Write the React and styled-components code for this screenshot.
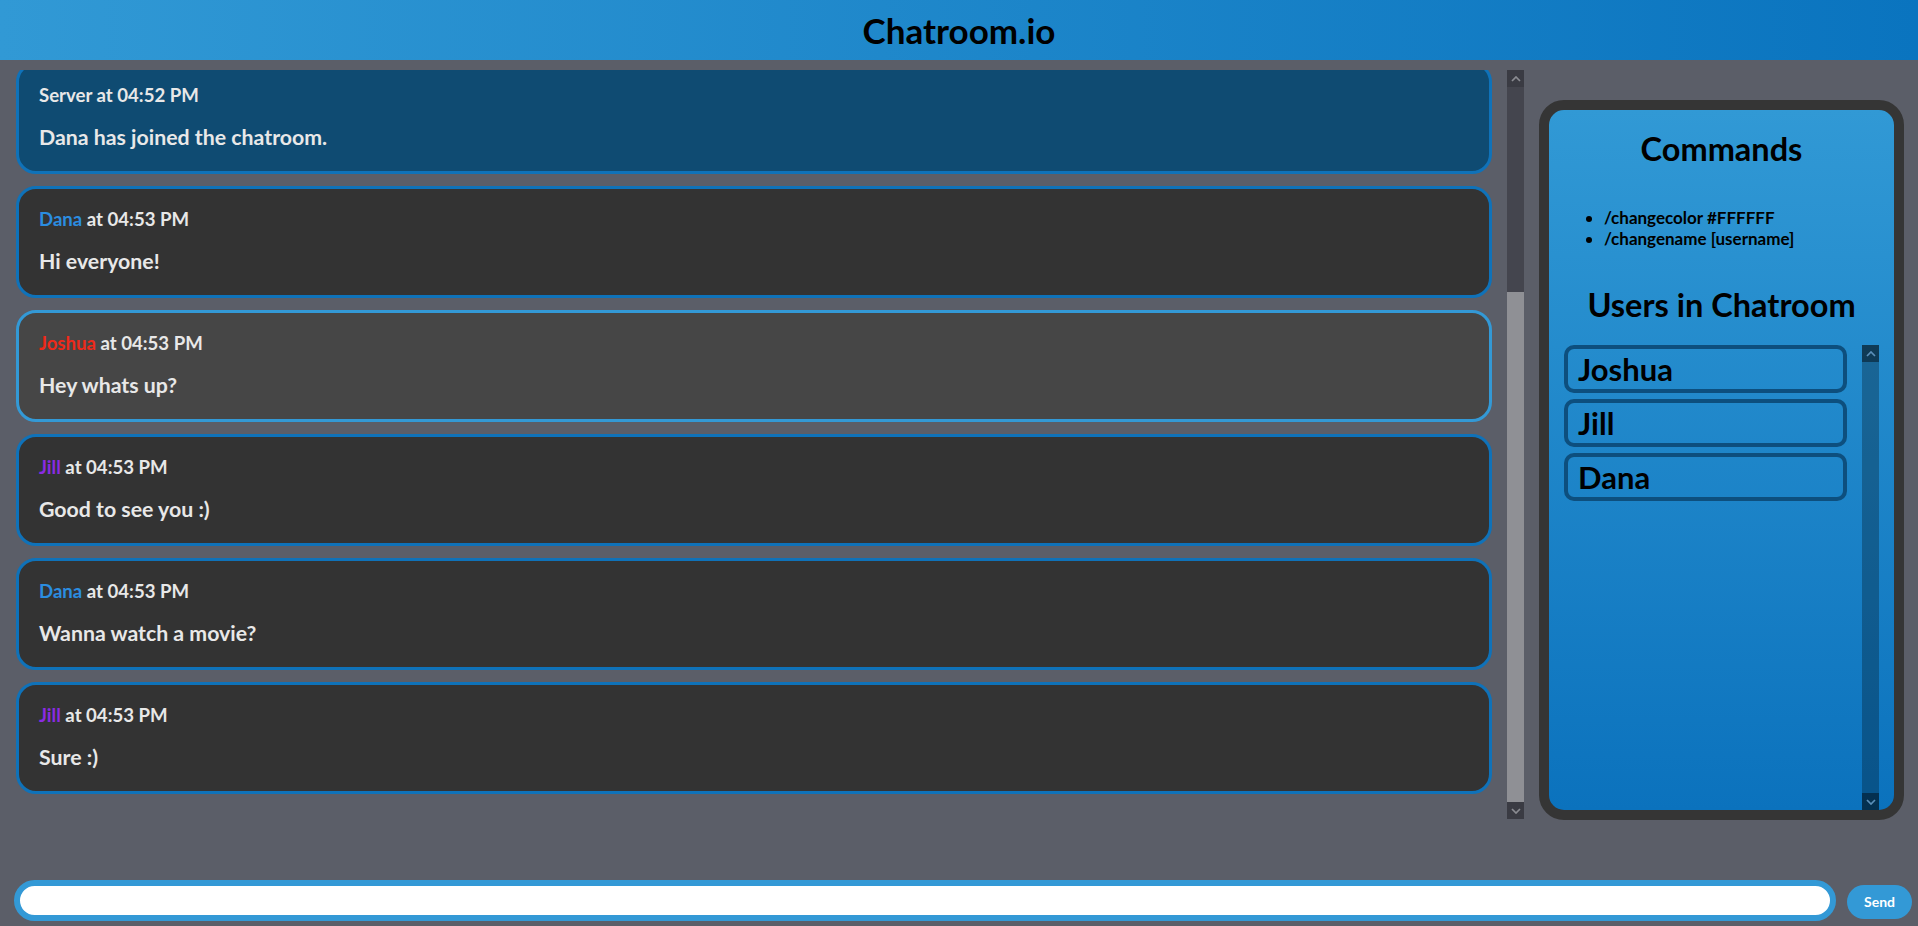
import React, { useLayoutEffect, useRef, useState } from "react";
import styled, { createGlobalStyle, css } from "styled-components";

const FONT = `"Trebuchet MS", Lato, "Noto Sans", sans-serif`;

const GlobalStyle = createGlobalStyle`
  html, body {
    margin: 0;
    padding: 0;
    height: 100%;
    overflow: hidden;
    background: #5b5e68;
    font-family: ${FONT};
  }
  * { box-sizing: border-box; }
`;

const Page = styled.div`
  display: flex;
  flex-direction: column;
  height: 100vh;
  background: #5b5e68;
`;

const Header = styled.header`
  flex: none;
  height: 60px;
  display: flex;
  align-items: center;
  justify-content: center;
  background: linear-gradient(to right, #3199d5, #0a74bf);
`;

const Title = styled.h1`
  margin: 0;
  font-size: 35px;
  line-height: 40px;
  font-weight: 700;
  color: #000;
`;

const Main = styled.main`
  flex: none;
  display: flex;
  padding-top: 10px;
`;

/* ---------- scrollbar drawing ---------- */

const Rail = styled.div`
  flex: none;
  width: 17px;
  display: flex;
  flex-direction: column;
  background: ${(p) => p.$track};
`;

const RailButton = styled.div`
  flex: none;
  height: 17px;
  display: flex;
  align-items: center;
  justify-content: center;
  background: ${(p) => p.$bg};
  color: ${(p) => p.$arrow};
`;

const RailTrack = styled.div`
  flex: 1;
  display: flex;
  flex-direction: column;
  justify-content: flex-end;
`;

const Thumb = styled.div`
  flex: none;
  background: #8f9095;
`;

const Chevron = ({ up }) => (
  <svg width="10" height="6" viewBox="0 0 10 6">
    <path
      d={up ? "M1 5 L5 1 L9 5" : "M1 1 L5 5 L9 1"}
      fill="none"
      stroke="currentColor"
      strokeWidth="1.7"
    />
  </svg>
);

const ScrollRail = ({ track, button, arrow, thumb }) => (
  <Rail $track={track}>
    <RailButton $bg={button} $arrow={arrow}>
      <Chevron up />
    </RailButton>
    <RailTrack>{thumb ? <Thumb style={{ height: thumb }} /> : null}</RailTrack>
    <RailButton $bg={button} $arrow={arrow}>
      <Chevron />
    </RailButton>
  </Rail>
);

/* ---------- chat ---------- */

const ChatPane = styled.section`
  flex: 1;
  height: 749px;
  display: flex;
`;

const ChatScroll = styled.div`
  flex: 1;
  overflow-y: auto;
  scrollbar-width: none;
  display: flex;
  flex-direction: column;
  gap: 12px;
  padding: 46px 15px 25px 16px;
  &::-webkit-scrollbar {
    display: none;
  }
`;

const variants = {
  server: css`
    background: #0f4b72;
    border-color: #0f72b9;
  `,
  active: css`
    background: #464646;
    border-color: #3399d6;
  `,
  normal: css`
    background: #333333;
    border-color: #0f72b9;
  `,
};

const Message = styled.article`
  flex: none;
  border: 3px solid;
  border-radius: 20px;
  padding: 20px 20px 21px;
  color: #e8e8e8;
  ${(p) => variants[p.$variant]}
`;

const MessageHead = styled.div`
  font-size: 18.6px;
  line-height: 21px;
  font-weight: 700;
`;

const Author = styled.span`
  color: ${(p) => p.$color};
`;

const MessageBody = styled.p`
  margin: 19px 0 0;
  font-size: 21.3px;
  line-height: 25px;
  font-weight: 700;
`;

/* ---------- sidebar ---------- */

const Sidebar = styled.aside`
  flex: none;
  width: 365px;
  height: 720px;
  margin: 30px 14px 0 15px;
  border: 10px solid #353535;
  border-radius: 25px;
  overflow: hidden;
  background: linear-gradient(to bottom, #3199d5, #0b72bd);
  padding: 21px 15px 0;
  display: flex;
  flex-direction: column;
`;

const PanelHeading = styled.h2`
  margin: ${(p) => p.$top}px 0 0;
  font-size: 32.5px;
  line-height: 36px;
  font-weight: 700;
  text-align: center;
  color: #000;
`;

const CommandList = styled.ul`
  margin: 40px 0 0;
  padding-left: 40px;
  font-size: 17px;
  line-height: 21px;
  font-weight: 700;
  color: #000;
`;

const UserPane = styled.div`
  flex: 1;
  min-height: 0;
  margin-top: 22px;
  display: flex;
`;

const UserList = styled.div`
  flex: 1;
  overflow-y: auto;
  display: flex;
  flex-direction: column;
  gap: 6px;
  padding-right: 15px;
`;

const UserItem = styled.div`
  flex: none;
  height: 48px;
  border: 4px solid #0d4f7e;
  border-radius: 10px;
  padding-left: 10px;
  font-size: 31px;
  line-height: 40px;
  font-weight: 700;
  color: #000;
`;

/* ---------- composer ---------- */

const Composer = styled.form`
  margin-top: auto;
  display: flex;
  align-items: center;
  gap: 11px;
  padding: 0 6px 5px 14px;
`;

const TextInput = styled.input`
  flex: 1;
  height: 41px;
  border: 6px solid #3399d6;
  border-radius: 21px;
  background: #fff;
  outline: none;
  padding: 0 12px;
  font-family: ${FONT};
  font-size: 16px;
`;

const SendButton = styled.button`
  width: 65px;
  height: 34px;
  margin-top: 2px;
  border: none;
  border-radius: 17px;
  background: #3399d6;
  color: #fff;
  font-family: ${FONT};
  font-size: 14px;
  font-weight: 700;
  cursor: pointer;
`;

const messages = [
  { author: "Server", time: "04:52 PM", text: "Joshua has joined the chatroom.", variant: "server" },
  { author: "Server", time: "04:52 PM", text: "Jill has joined the chatroom.", variant: "server" },
  { author: "Server", time: "04:52 PM", text: "Dana has joined the chatroom.", variant: "server" },
  { author: "Dana", color: "#2b8de0", time: "04:53 PM", text: "Hi everyone!", variant: "normal" },
  { author: "Joshua", color: "#ee2a1a", time: "04:53 PM", text: "Hey whats up?", variant: "active" },
  { author: "Jill", color: "#8a2be2", time: "04:53 PM", text: "Good to see you :)", variant: "normal" },
  { author: "Dana", color: "#2b8de0", time: "04:53 PM", text: "Wanna watch a movie?", variant: "normal" },
  { author: "Jill", color: "#8a2be2", time: "04:53 PM", text: "Sure :)", variant: "normal" },
];

const users = ["Joshua", "Jill", "Dana"];

export default function App() {
  const chatRef = useRef(null);
  const [thumb, setThumb] = useState(510);

  useLayoutEffect(() => {
    const el = chatRef.current;
    if (!el) return;
    el.scrollTop = el.scrollHeight;
    const track = el.clientHeight - 34;
    setThumb(Math.round((track * el.clientHeight) / el.scrollHeight));
  }, []);

  return (
    <Page>
      <GlobalStyle />
      <Header>
        <Title>Chatroom.io</Title>
      </Header>
      <Main>
        <ChatPane>
          <ChatScroll ref={chatRef}>
            {messages.map((m, i) => (
              <Message key={i} $variant={m.variant}>
                <MessageHead>
                  {m.color ? <Author $color={m.color}>{m.author}</Author> : m.author} at {m.time}
                </MessageHead>
                <MessageBody>{m.text}</MessageBody>
              </Message>
            ))}
          </ChatScroll>
          <ScrollRail track="#44454e" button="#3a3b43" arrow="#8b8c92" thumb={thumb} />
        </ChatPane>
        <Sidebar>
          <PanelHeading $top={0}>Commands</PanelHeading>
          <CommandList>
            <li>/changecolor #FFFFFF</li>
            <li>/changename [username]</li>
          </CommandList>
          <PanelHeading $top={38}>Users in Chatroom</PanelHeading>
          <UserPane>
            <UserList>
              {users.map((u) => (
                <UserItem key={u}>{u}</UserItem>
              ))}
            </UserList>
            <ScrollRail
              track="rgba(0,0,0,0.27)"
              button="rgba(0,0,0,0.42)"
              arrow="#5b8fb9"
            />
          </UserPane>
        </Sidebar>
      </Main>
      <Composer onSubmit={(e) => e.preventDefault()}>
        <TextInput type="text" />
        <SendButton type="submit">Send</SendButton>
      </Composer>
    </Page>
  );
}
